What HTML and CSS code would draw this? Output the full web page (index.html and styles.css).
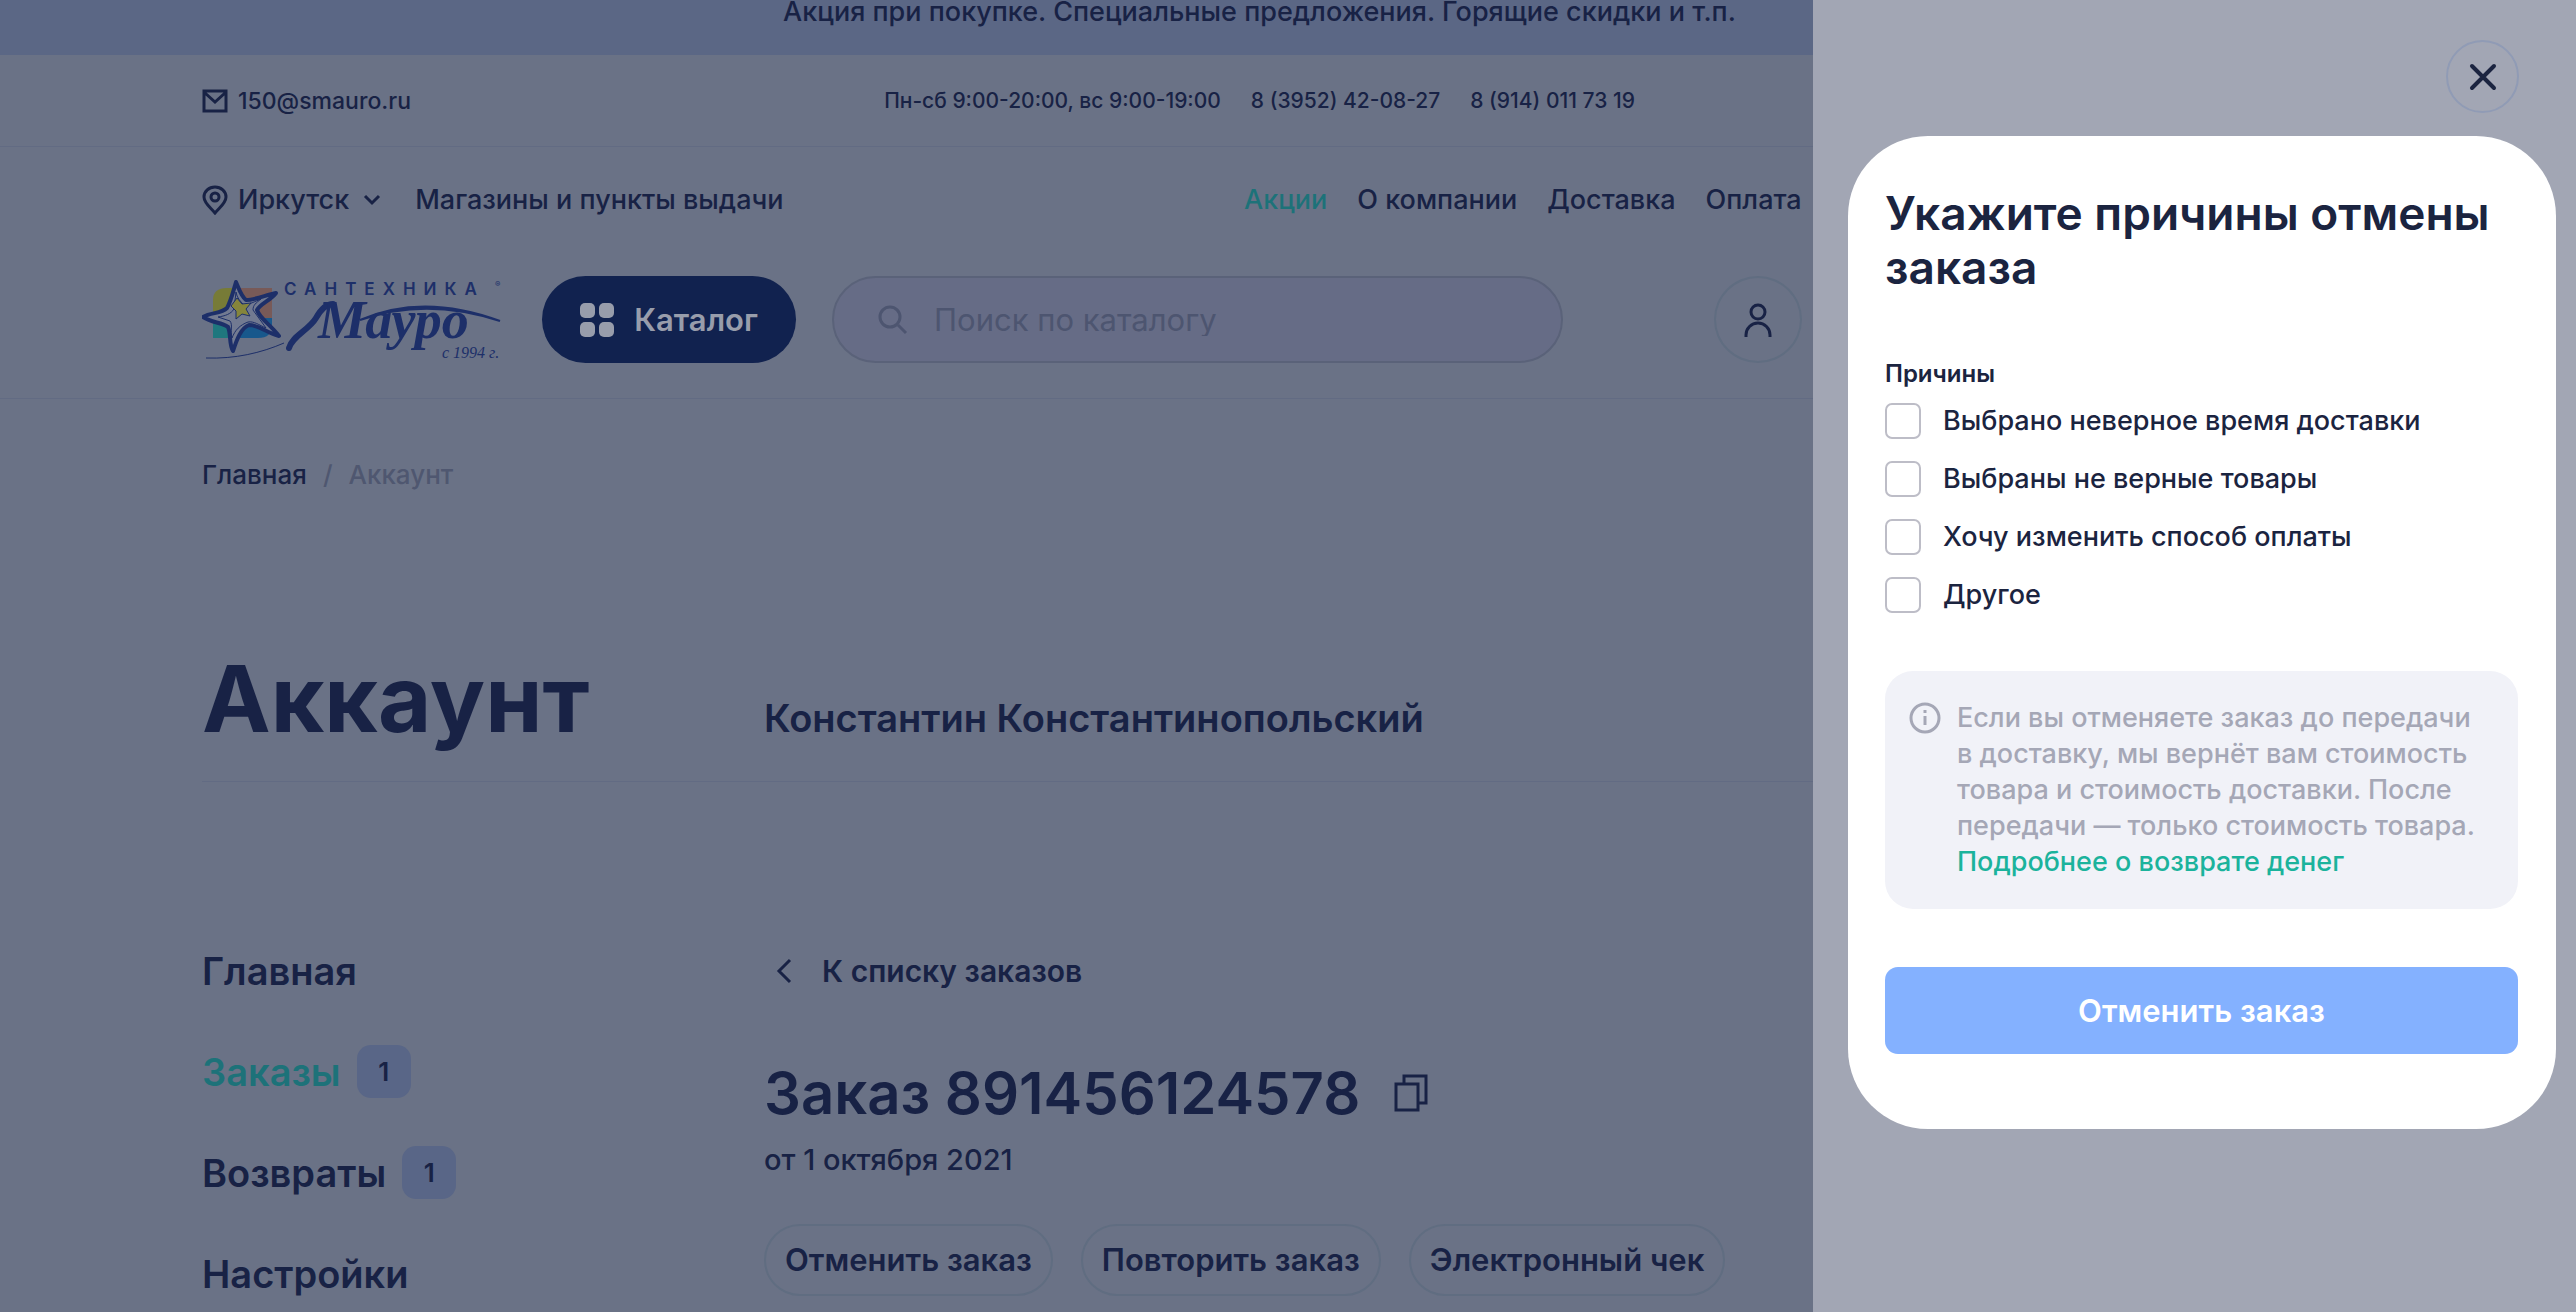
FILE: index.html
```html
<!DOCTYPE html>
<html lang="ru">
<head>
<meta charset="utf-8">
<meta name="viewport" content="width=device-width, initial-scale=1">
<title>Аккаунт</title>
<link rel="stylesheet" href="styles.css">
</head>
<body>
<div class="page">
  <div class="promo">Акция при покупке. Специальные предложения. Горящие скидки и т.п.</div>

  <header class="header">
    <div class="contacts">
      <a class="mail" href="#">
        <svg width="26" height="24" viewBox="0 0 26 24" fill="none" stroke="currentColor" stroke-width="3"><path d="M2 2h22v20H2zM3 4l10 9L23 4"/></svg>
        150@smauro.ru
      </a>
      <div class="phones">
        <span>Пн-сб 9:00-20:00, вс 9:00-19:00</span>
        <a href="#">8 (3952) 42-08-27</a>
        <a href="#">8 (914) 011 73 19</a>
      </div>
    </div>

    <div class="links">
      <div class="places">
        <button class="city" type="button">
          <svg width="26" height="30" viewBox="0 0 26 30" fill="none" stroke="currentColor" stroke-width="3"><path d="M13 28C8 22 2 18 2 12a11 10 0 0 1 22 0c0 6-6 10-11 16z"/><circle cx="13" cy="12" r="4"/></svg>
          Иркутск
          <svg class="chevron" width="18" height="12" viewBox="0 0 18 12" fill="none" stroke="currentColor" stroke-width="3"><path d="M2 2l7 7 7-7"/></svg>
        </button>
        <a href="#">Магазины и пункты выдачи</a>
      </div>
      <nav class="nav">
        <a class="active" href="#">Акции</a>
        <a href="#">О компании</a>
        <a href="#">Доставка</a>
        <a href="#">Оплата</a>
      </nav>
    </div>

    <div class="tools">
      <a class="logo" href="#" aria-label="Сантехника Мауро">
        <svg width="302" height="84" viewBox="0 0 302 84">
          <path d="M11 48V22q0-12 14-12h13v38z" fill="#777b37"/>
          <path d="M37 10h33v38H37z" fill="#785a58"/>
          <path d="M11 40h28v20H11z" fill="#1f777e"/>
          <path d="M35 40h35v7q0 13-14 13H35z" fill="#18588c"/>
          <path d="M34 4c3 7 5 14 10 18 9 0 20-5 30-7-5 7-16 11-19 17 3 9 13 14 22 26-12-3-20-11-30-11-8 3-12 14-16 26-4-6-2-18-5-24-7-5-16-4-25-10 8-5 18-3 24-9 4-7 6-16 9-26z" fill="#727a91" stroke="#1d2f69" stroke-width="4" stroke-linejoin="round"/>
          <path d="M34 14c1 6 4 9 8 13 4 0 12-4 17-6-5 4-8 6-8 11l13 18c-7-3-12-7-18-6-8 3-13 8-16 16-2-8 1-13-2-17l-12-4c7-1 13-3 16-8z" fill="none" stroke="#1d2f69" stroke-width="1"/>
          <path d="M35 20l5 6 9-1-5 6 4 7-8-2-6 5v-8l-5-5z" fill="#85853b" stroke="#1d2f69" stroke-width="1"/>
          <path d="M4 80c29 1 55-5 78-15" fill="none" stroke="#1d2f69" stroke-width="1"/>
          <path d="M87 70c3-12 20-18 27-30 5-9 11-14 17-14" fill="none" stroke="#1d2f69" stroke-width="6" stroke-linecap="round"/>
          <path d="M158 42C190 28 236 20 298 43c-55-18-100-15-140-1z" fill="#1d2f69" stroke="#1d2f69" stroke-width="2"/>
          <text class="logo-top" x="82" y="17">САНТЕХНИКА</text>
          <text class="logo-reg" x="293" y="9">®</text>
          <text class="logo-name" x="116" y="60">Мауро</text>
          <text class="logo-year" x="240" y="80">с 1994 г.</text>
        </svg>
      </a>
      <button class="catalog" type="button">
        <svg width="34" height="34" viewBox="0 0 34 34" fill="currentColor"><rect width="15" height="15" rx="5"/><rect x="19" width="15" height="15" rx="5"/><rect y="19" width="15" height="15" rx="5"/><rect x="19" y="19" width="15" height="15" rx="5"/></svg>
        Каталог
      </button>
      <label class="search">
        <svg width="30" height="30" viewBox="0 0 30 30" fill="none" stroke="currentColor" stroke-width="3"><circle cx="12" cy="12" r="10"/><path d="M20 20l8 8"/></svg>
        <input type="search" placeholder="Поиск по каталогу" aria-label="Поиск по каталогу">
      </label>
      <button class="user" type="button" aria-label="Профиль">
        <svg width="28" height="34" viewBox="0 0 28 34" fill="none" stroke="currentColor" stroke-width="3"><circle cx="14" cy="9" r="7"/><path d="M2 34v-2a12 12 0 0 1 24 0v2"/></svg>
      </button>
    </div>
  </header>

  <div class="content">
    <div class="crumbs">
      <a href="#">Главная</a>
      <span>/</span>
      <span>Аккаунт</span>
    </div>

    <div class="heading">
      <h1>Аккаунт</h1>
      <div class="name">Константин Константинопольский</div>
    </div>

    <div class="account">
      <nav class="menu">
        <a href="#">Главная</a>
        <a class="active" href="#">Заказы <span class="badge">1</span></a>
        <a href="#">Возвраты <span class="badge">1</span></a>
        <a href="#">Настройки</a>
      </nav>
      <main>
        <a class="back" href="#">
          <svg width="46" height="26" viewBox="0 0 46 26" fill="none" stroke="currentColor" stroke-width="3"><path d="M26 2L15 13l11 11"/></svg>
          К списку заказов
        </a>
        <div class="order">
          <h2>Заказ 891456124578</h2>
          <button class="copy" type="button" aria-label="Скопировать номер">
            <svg width="34" height="38" viewBox="0 0 34 38" fill="none" stroke="currentColor" stroke-width="3"><path d="M2 10h22v26H2zM10 10V2h22v27h-8"/></svg>
          </button>
        </div>
        <div class="date">от 1 октября 2021</div>
        <div class="actions">
          <button type="button">Отменить заказ</button>
          <button type="button">Повторить заказ</button>
          <button type="button">Электронный чек</button>
        </div>
      </main>
    </div>
  </div>
</div>

<aside class="drawer">
  <button class="close" type="button" aria-label="Закрыть">
    <svg width="28" height="28" viewBox="0 0 28 28" fill="none" stroke="currentColor" stroke-width="4" stroke-linecap="round"><path d="M3 3l22 22M25 3L3 25"/></svg>
  </button>
  <form class="card">
    <h3>Укажите причины отмены заказа</h3>
    <fieldset class="reasons">
      <legend>Причины</legend>
      <label><input type="checkbox"> Выбрано неверное время доставки</label>
      <label><input type="checkbox"> Выбраны не верные товары</label>
      <label><input type="checkbox"> Хочу изменить способ оплаты</label>
      <label><input type="checkbox"> Другое</label>
    </fieldset>
    <div class="info">
      <svg width="32" height="32" viewBox="0 0 32 32" fill="none" stroke="currentColor" stroke-width="3"><circle cx="16" cy="16" r="14"/><path d="M16 14v9M16 8v3"/></svg>
      <p>Если вы отменяете заказ до передачи<br>в доставку, мы вернёт вам стоимость<br>товара и стоимость доставки. После<br>передачи — только стоимость товара.<br><a href="#">Подробнее о возврате денег</a></p>
    </div>
    <button class="submit" type="button">Отменить заказ</button>
  </form>
</aside>
</body>
</html>
```
FILE: styles.css
```css
* {
    box-sizing: border-box;
}

body {
    margin: 0;
    min-height: 100vh;
    background: #6a7286;
    color: #182245;
    font-family: Inter, "Noto Sans", sans-serif;
    font-size: 27px;
    font-weight: 500;
    line-height: 32px;
}

a {
    color: inherit;
    text-decoration: none;
}

button, input {
    margin: 0;
    padding: 0;
    border: none;
    background: none;
    color: inherit;
    font: inherit;
}

svg {
    display: block;
    flex-shrink: 0;
}

h1, h2, h3, p {
    margin: 0;
}

.page {
    margin-right: 57px;
}

.promo {
    height: 55px;
    background: #5b6785;
    line-height: 24px;
    text-align: center;
    white-space: nowrap;
}

.header {
    border-bottom: 1px solid #626b83;
}

.contacts {
    display: grid;
    grid-template-columns: 1fr auto 1fr;
    align-items: center;
    height: 92px;
    padding: 0 202px;
    border-bottom: 1px solid #626b83;
    font-size: 21px;
}

.mail, .phones, .places, .city, .nav {
    display: flex;
    align-items: center;
    white-space: nowrap;
}

.mail, .city {
    gap: 10px;
}

.mail {
    font-size: 23px;
}

.phones, .nav {
    gap: 30px;
}

.links {
    display: grid;
    grid-template-columns: 1042px 1fr;
    padding: 37px 202px 0;
}

.places {
    gap: 34px;
}

.chevron {
    margin-left: 4px;
}

.active {
    color: #1d7279;
}

.tools {
    display: flex;
    align-items: center;
    gap: 36px;
    padding: 60px 202px 35px;
}

.logo {
    margin-right: 2px;
}

.logo-top {
    fill: #1d2f69;
    font-size: 17px;
    font-weight: 600;
    letter-spacing: 8px;
}

.logo-reg {
    fill: #1d2f69;
    font-size: 8px;
}

.logo-name {
    fill: #1d2f69;
    font-family: "Liberation Serif", serif;
    font-size: 54px;
    font-style: italic;
    font-weight: 700;
}

.logo-year {
    fill: #1d2f69;
    font-family: "Liberation Serif", serif;
    font-size: 16px;
    font-style: italic;
}

.catalog {
    display: flex;
    align-items: center;
    justify-content: center;
    gap: 20px;
    width: 254px;
    height: 87px;
    border-radius: 44px;
    background: #11224f;
    color: #989dab;
    font-size: 31px;
    font-weight: 600;
}

.search {
    display: flex;
    align-items: center;
    gap: 26px;
    flex: 0 1 731px;
    height: 87px;
    padding: 0 44px;
    border: 2px solid #5a6279;
    border-radius: 44px;
    background: #666c86;
    color: #4d5570;
    font-size: 31px;
}

.search input {
    flex: 1;
    min-width: 0;
    outline: none;
}

.search input::placeholder {
    color: #4d5570;
    font-weight: 400;
    opacity: 1;
}

.user {
    display: flex;
    align-items: center;
    justify-content: center;
    width: 88px;
    height: 87px;
    margin-left: 115px;
    border: 2px solid #606d81;
    border-radius: 50%;
}

.content {
    padding: 60px 202px 0;
}

.crumbs {
    display: flex;
    gap: 16px;
    font-size: 26px;
}

.crumbs span {
    color: #4f5770;
}

.heading {
    display: grid;
    grid-template-columns: 562px 1fr;
    align-items: baseline;
    margin-top: 156px;
    padding-bottom: 30px;
    border-bottom: 1px solid #626b83;
}

h1 {
    font-size: 92px;
    font-weight: 700;
    line-height: 104px;
}

.name, .menu {
    font-size: 38px;
    font-weight: 600;
}

.account {
    display: grid;
    grid-template-columns: 562px 1fr;
    padding-top: 162px;
}

.menu {
    display: flex;
    flex-direction: column;
    gap: 48px;
}

.menu a {
    display: flex;
    align-items: center;
    gap: 16px;
    height: 53px;
}

.badge {
    width: 54px;
    border-radius: 14px;
    background: #596687;
    color: #182245;
    font-size: 26px;
    line-height: 53px;
    text-align: center;
}

.back {
    display: flex;
    align-items: center;
    gap: 12px;
    height: 53px;
    font-size: 30px;
    font-weight: 600;
}

.order {
    display: flex;
    align-items: center;
    gap: 34px;
    margin-top: 64px;
}

h2 {
    font-size: 58px;
    font-weight: 600;
    line-height: 64px;
}

.date {
    margin-top: 19px;
    font-size: 29px;
}

.actions {
    display: flex;
    gap: 28px;
    margin-top: 48px;
}

.actions button {
    height: 72px;
    padding: 0 19px;
    border: 2px solid #606d81;
    border-radius: 36px;
    font-size: 31px;
    font-weight: 600;
}

/* cancel order drawer */
.drawer {
    position: fixed;
    top: 0;
    right: 0;
    bottom: 0;
    width: 763px;
    padding: 40px 20px 0 35px;
    background: #a2a6b4;
    color: #1b2440;
}

.close {
    display: flex;
    align-items: center;
    justify-content: center;
    width: 73px;
    height: 73px;
    margin: 0 37px 23px auto;
    border: 2px solid #909bb5;
    border-radius: 50%;
}

.card {
    padding: 50px 38px 75px 37px;
    border-radius: 80px;
    background: #fff;
}

h3 {
    font-size: 46px;
    font-weight: 600;
    line-height: 54px;
}

.reasons {
    display: flex;
    flex-direction: column;
    gap: 22px;
    margin: 64px 0 0;
    padding: 0;
    border: none;
}

.reasons legend {
    padding: 0 0 13px;
    font-size: 24px;
    font-weight: 600;
}

.reasons label {
    display: flex;
    align-items: center;
    gap: 22px;
    height: 36px;
}

.reasons input {
    appearance: none;
    width: 36px;
    height: 36px;
    border: 2px solid #bdbdc7;
    border-radius: 7px;
}

.info {
    display: flex;
    gap: 16px;
    margin-top: 58px;
    padding: 29px 24px;
    border-radius: 28px;
    background: #f1f2f8;
    color: #a5a7b6;
}

.info svg {
    margin-top: 2px;
}

.info p {
    line-height: 36px;
    white-space: nowrap;
}

.info a {
    color: #1bb39c;
}

.submit {
    width: 100%;
    height: 87px;
    margin-top: 58px;
    border-radius: 13px;
    background: #84b1ff;
    color: #fff;
    font-size: 31px;
    font-weight: 600;
}
```
